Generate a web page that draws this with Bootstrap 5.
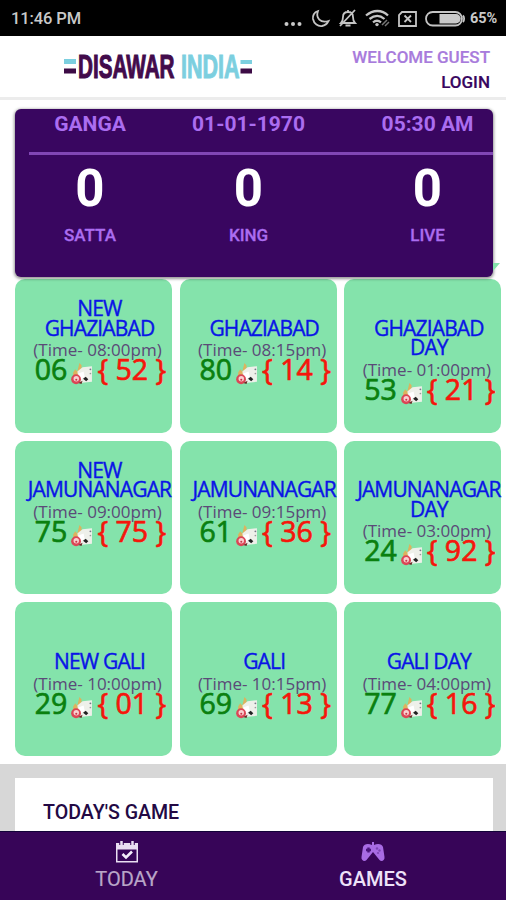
<!DOCTYPE html>
<html lang="en">
<head>
<meta charset="utf-8">
<meta name="viewport" content="width=device-width, initial-scale=1">
<title>Disawar India</title>
<link href="https://cdn.jsdelivr.net/npm/bootstrap@5.3.0/dist/css/bootstrap.min.css" rel="stylesheet">
<style>
body{font-family:Roboto,sans-serif;background:#fff;width:506px;height:900px;overflow:hidden}
svg{display:block;flex:none}
.statusbar{height:36px;background:#000;color:#c9c9c9;font-size:16.5px;padding:0 9px 0 11px;font-weight:500}
.statusbar .clock{letter-spacing:-.1px;padding-top:2px}
.statusbar .batt{font-size:14.5px;font-weight:700;letter-spacing:-.1px;padding-top:1px}
.brandbar{height:64px;border-bottom:3px solid #ececec;padding:0 16px 0 63px}
.welcome{color:#a87bdc;font-size:17px;line-height:25px;font-weight:500;padding-top:9px;-webkit-text-stroke:.2px}
.welcome a{color:#38065f;text-decoration:none}
.live{margin:9px 13px 0 15px;height:168px;background:#390660;border-radius:6px;box-shadow:0 1px 3px 1px rgba(0,0,0,.4);color:#ab6df0;z-index:2}
.live .col-a{width:150px}.live .col-b{width:167px}.live .col-c{width:191px;margin-right:-30px}
.live .toprow{font-size:21px;line-height:31px;font-weight:700;height:43px}
.live .rule{height:3px;background:#8146b5;margin-left:14px}
.live .big{font-size:51px;line-height:60px;color:#fff;font-weight:700;padding-top:4px}
.live .lbl{font-size:17px;line-height:20px;font-weight:500;padding-top:6px;-webkit-text-stroke:.3px}
.flag{right:-7px;bottom:6px;width:7px;height:8px;background:#83e2ab;clip-path:polygon(0 0,100% 0,0 100%)}
.tiles{display:grid;grid-template-columns:repeat(3,157px);gap:8px 7.7px;padding:2px 0 8px 15px;font-family:"Open Sans","Noto Sans",sans-serif}
.tile{height:153.6px;background:#84e3ab;border-radius:10px;padding:39.5px 0 0 15px;text-align:center;white-space:nowrap}
.tile.two{padding-top:20px}
.tile.low{padding-top:50px}
.tile h2{font-size:21px;line-height:19.6px;color:#0a14e6;margin:0 -7px 0 -10px;font-weight:400;letter-spacing:-.85px;-webkit-text-stroke:.4px #0a14e6}
.tile .when{font-size:17px;line-height:23px;color:#5b4a78;letter-spacing:0;margin-left:-7px}
.tile .nums{font-size:28.5px;line-height:17px;font-weight:500;margin:0 -5px 0 -6px}
.nums b{font-weight:400;color:#0a800f;-webkit-text-stroke:.7px #0a800f}
.nums i{font-style:normal;color:#f5160c;-webkit-text-stroke:.7px #f5160c}
.nums svg{margin:1px 5px 0 4px}
.todaywrap{background:#d7d7d7;padding:14px 13px 0 15px;height:67px}
.todaybox{background:#fff;height:53px;padding:22px 28px;color:#230944;font-size:19.600px;line-height:25px;font-weight:500}
.tabbar{height:69px;background:#370558;border-top:1px solid #120338;font-size:20px;line-height:24px}
.tabbar .tab-a{width:253px;color:#b9a6c8;-webkit-text-stroke:.2px}
.tabbar .tab-b{width:240px;color:#eee2f8;font-weight:500}
.tabbar span{margin-top:3px}
</style>
<script src="https://cdn.jsdelivr.net/npm/bootstrap@5.3.0/dist/js/bootstrap.bundle.min.js"></script>
</head>
<body>
<svg width="0" height="0" class="position-absolute">
  <symbol id="dice" viewBox="0 0 20 22">
    <path d="M2 10 4 7l2 2 2-8 2 2v8l-2 5-6 2z" fill="#dcb35e"/>
    <path d="M6 9 11 5l9-1v15l-12 1z" fill="#eef0ea"/>
    <path d="m7 11 5-2 1 5-4 3z" fill="#fff"/>
    <path d="m11.500 16 2.500-1.800 2.500 2.300-2 2z" fill="#222"/><circle cx="18.500" cy="7" r=".9" fill="#778"/><circle cx="18.500" cy="11" r=".8" fill="#999"/>
    <circle cx="4.800" cy="16.500" r="4.700" fill="#dc4656"/><circle cx="5" cy="16" r="2.600" fill="#f9d0d0"/><circle cx="5" cy="17" r="1" fill="#c93347"/><path d="m7 20 4-2-1 3z" fill="#6b2a25"/>
  </symbol>
</svg>

<div class="statusbar d-flex align-items-center justify-content-between">
  <span class="clock">11:46 PM</span>
  <div class="d-flex align-items-center">
    <svg width="186" height="24" viewBox="283 6 186 24" fill="none" stroke="#c4c4c4" stroke-width="1.800">
      <g fill="#c9c9c9" stroke="none"><circle cx="285.500" cy="24" r="2"/><circle cx="292" cy="24" r="2"/><circle cx="298.500" cy="24" r="2"/></g>
      <path d="M317 11c-4 1-5.500 5-5 8 1 5 5 7.500 9 7 3-.500 5-2 6.500-5-8 2.500-13-3-10.500-10Z"/>
      <path d="M340 23c2-2 2-4 2-6 0-3 2-5 5-5s5 2 5 5c0 3 0 4 2 6Zm7-11v-2M344.500 25.500h5M339 26l15-16"/>
      <path d="M365 15.500c7-6 16-6 22 0M368.500 19c5-4 10.500-4 15 0M372 22.300c2.500-2 5.500-2 8 0" stroke-width="2.300"/><circle cx="376" cy="24.600" r="1.700" fill="#c4c4c4" stroke="none"/>
      <path d="m381 25 5-5m-2 6 4-4" stroke="#777" stroke-width="1.500"/>
      <path d="M401 12h14v14h-17V15Z"/><path d="m403.500 15.500 6.500 6.500m0-6.500-6.500 6.500"/>
      <rect x="425" y="12" width="36" height="13.500" rx="6.700"/><path d="M438.500 14H455a4.700 4.700 0 0 1 0 9.500h-16.500z" fill="#c9c9c9" stroke="none"/><path d="M462 15.500c1.500 1.500 1.500 5 0 6.500"/>
    </svg>
    <span class="batt">65%</span>
  </div>
</div>

<header class="brandbar d-flex justify-content-between bg-white">
  <svg width="190" height="60" viewBox="63 36 190 60" font-family="Liberation Sans,sans-serif" font-weight="700" font-size="32.500">
    <path d="M64 59h12v5H64zM240.500 60h11.500v4h-11.500z" fill="#7ccfdf"/>
    <path d="M64 68.500h12v5H64zM240.500 68.500h11.500v5h-11.500z" fill="#3c0b45"/>
    <text x="78" y="77.500" textLength="96.500" lengthAdjust="spacingAndGlyphs" fill="#420b4b" stroke="#420b4b" stroke-width="1.100">DISAWAR</text>
    <text x="181" y="77.500" textLength="58.500" lengthAdjust="spacingAndGlyphs" fill="#7ccfdf" stroke="#7ccfdf" stroke-width="1">INDIA</text>
  </svg>
  <div class="welcome text-end">WELCOME GUEST<br><a href="#">LOGIN</a></div>
</header>

<main>
  <section class="live position-relative">
    <div class="toprow d-flex text-center"><div class="col-a">GANGA</div><div class="col-b">01-01-1970</div><div class="col-c">05:30 AM</div></div>
    <div class="rule"></div>
    <div class="d-flex text-center">
      <div class="col-a"><div class="big">0</div><div class="lbl">SATTA</div></div>
      <div class="col-b"><div class="big">0</div><div class="lbl">KING</div></div>
      <div class="col-c"><div class="big">0</div><div class="lbl">LIVE</div></div>
    </div>
    <span class="flag position-absolute"></span>
  </section>

  <section class="tiles">
    <article class="tile two"><h2>NEW<br>GHAZIABAD</h2><div class="when">(Time- 08:00pm)</div><div class="nums d-flex justify-content-center"><b>06</b><svg width="21" height="23"><use href="#dice"/></svg><i>{ 52 }</i></div></article>
    <article class="tile"><h2>GHAZIABAD</h2><div class="when">(Time- 08:15pm)</div><div class="nums d-flex justify-content-center"><b>80</b><svg width="21" height="23"><use href="#dice"/></svg><i>{ 14 }</i></div></article>
    <article class="tile"><h2>GHAZIABAD<br>DAY</h2><div class="when">(Time- 01:00pm)</div><div class="nums d-flex justify-content-center"><b>53</b><svg width="21" height="23"><use href="#dice"/></svg><i>{ 21 }</i></div></article>
    <article class="tile two"><h2>NEW<br>JAMUNANAGAR</h2><div class="when">(Time- 09:00pm)</div><div class="nums d-flex justify-content-center"><b>75</b><svg width="21" height="23"><use href="#dice"/></svg><i>{ 75 }</i></div></article>
    <article class="tile"><h2>JAMUNANAGAR</h2><div class="when">(Time- 09:15pm)</div><div class="nums d-flex justify-content-center"><b>61</b><svg width="21" height="23"><use href="#dice"/></svg><i>{ 36 }</i></div></article>
    <article class="tile"><h2>JAMUNANAGAR<br>DAY</h2><div class="when">(Time- 03:00pm)</div><div class="nums d-flex justify-content-center"><b>24</b><svg width="21" height="23"><use href="#dice"/></svg><i>{ 92 }</i></div></article>
    <article class="tile low"><h2>NEW GALI</h2><div class="when">(Time- 10:00pm)</div><div class="nums d-flex justify-content-center"><b>29</b><svg width="21" height="23"><use href="#dice"/></svg><i>{ 01 }</i></div></article>
    <article class="tile low"><h2>GALI</h2><div class="when">(Time- 10:15pm)</div><div class="nums d-flex justify-content-center"><b>69</b><svg width="21" height="23"><use href="#dice"/></svg><i>{ 13 }</i></div></article>
    <article class="tile low"><h2>GALI DAY</h2><div class="when">(Time- 04:00pm)</div><div class="nums d-flex justify-content-center"><b>77</b><svg width="21" height="23"><use href="#dice"/></svg><i>{ 16 }</i></div></article>
  </section>

  <section class="todaywrap"><div class="todaybox">TODAY'S GAME</div></section>
</main>

<nav class="tabbar d-flex text-center">
  <div class="tab-a d-flex flex-column align-items-center pt-2">
    <svg width="24" height="24" viewBox="0 0 24 24"><path d="M1 3h22v19.500H1z" fill="#e9def2"/><path d="M2.500 9.500h19v11.500h-19z" fill="#370558"/><path d="M6.500 0v5M17.500 0v5" stroke="#370558" stroke-width="4.500"/><path d="M6.500 1v4.500M17.500 1v4.500" stroke="#e9def2" stroke-width="2.500"/><path d="m7.500 14 3.500 3.500 6-6" fill="none" stroke="#f4ecfa" stroke-width="2.600"/></svg>
    <span>TODAY</span>
  </div>
  <div class="tab-b d-flex flex-column align-items-center pt-2">
    <svg width="24" height="24" viewBox="0 0 24 24"><path d="M11 2h2v3c4-2 8-1 9 2l1.500 10c.500 3.500-3 5-5 3L12 12l-6.500 8c-2 2-5.500.5-5-3L2 7c1-3 5-4 9-2z" fill="#a86be4"/><path d="M7.500 7.500v5M5 10h5" stroke="#4a147c" stroke-width="2.400"/><circle cx="16" cy="8.500" r="1.200" fill="#7d45b5"/><circle cx="18.500" cy="10.500" r="1.200" fill="#7d45b5"/><circle cx="17" cy="13" r="1.100" fill="#7d45b5"/></svg>
    <span>GAMES</span>
  </div>
</nav>
</body>
</html>
